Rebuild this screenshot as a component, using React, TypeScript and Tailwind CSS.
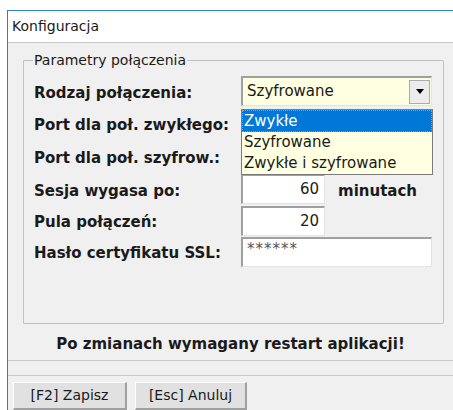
const labels = [
  "Rodzaj połączenia:",
  "Port dla poł. zwykłego:",
  "Port dla poł. szyfrow.:",
  "Sesja wygasa po:",
  "Pula połączeń:",
  "Hasło certyfikatu SSL:",
];

const options = ["Zwykłe", "Szyfrowane", "Zwykłe i szyfrowane"];

const sunken =
  "border-t-2 border-l-2 border-b border-r border-t-[#a0a0a0] border-l-[#a0a0a0] border-b-[#e3e3e3] border-r-[#e3e3e3]";

const Field = ({ value, wide }: { value: string; wide?: boolean }) => (
  <div
    className={`${sunken} bg-white h-[30px] flex items-center font-normal ${
      wide ? "w-[191px] justify-start pl-[4px]" : "w-[84px] justify-end pr-[5px]"
    }`}
  >
    <span className={wide ? "text-[#555] tracking-[1px] -mt-[6px]" : ""}>{value}</span>
  </div>
);

const Label = ({ children }: { children: string }) => (
  <span className="pt-[4px]">{children}</span>
);

const btn =
  "h-[28px] bg-[#e1e1e1] border-t border-l border-white border-r-2 border-b-2 border-r-[#a0a0a0] border-b-[#a0a0a0]";

export default function App() {
  return (
    <div className="w-[453px] h-[410px] bg-white pt-[10px] pl-[7px] overflow-hidden text-[15px] text-[#1a1a1a] font-['DejaVu_Sans',sans-serif]">
      <div className="h-full flex flex-col border-t border-l border-[#2a7fd4]">
        <div className="h-[33px] bg-white flex items-center pl-[4px] border-b border-[#c8c8c8] text-[14px]">
          Konfiguracja
        </div>

        <div className="flex-1 bg-[#f0f0f0] flex flex-col">
          <fieldset className="relative mt-[9px] ml-[15px] mr-[9px] h-[272px] border border-[#c3c3c3] rounded-[1px] pl-[10px]">
            <legend className="-ml-[1px] px-[1px] text-[14px] leading-[16px]">
              Parametry połączenia
            </legend>

            <div className="grid grid-cols-[207px_1fr] grid-rows-[32px_33px_33px_32px_31px_31px] items-center mt-[7px] font-bold">
              <Label>{labels[0]}</Label>
              <div className={`${sunken} h-[30px] w-[191px] bg-[#ffffe1] flex items-center justify-between pl-[4px] pr-[1px] font-normal`}>
                <span>Szyfrowane</span>
                <div className="w-[21px] h-[24px] bg-[#ececec] border border-[#adadad] flex items-center justify-center">
                  <svg width="8" height="5" viewBox="0 0 8 5">
                    <path d="M0 0h8L4 5z" fill="#000" />
                  </svg>
                </div>
              </div>

              <Label>{labels[1]}</Label>
              <div />

              <Label>{labels[2]}</Label>
              <div />

              <Label>{labels[3]}</Label>
              <div className="flex items-center gap-[13px]">
                <Field value="60" />
                <span className="pt-[4px]">minutach</span>
              </div>

              <Label>{labels[4]}</Label>
              <Field value="20" />

              <Label>{labels[5]}</Label>
              <Field value="******" wide />
            </div>

            {/* open list of the connection type combo */}
            <div className="absolute left-[217px] top-[41px] w-[192px] bg-[#ffffe1] border border-[#7a7a7a] flex flex-col leading-[21px]">
              {options.map((o, i) => (
                <span
                  key={o}
                  className={
                    i === 0
                      ? "bg-[#0078d7] text-white pl-[2px] h-[22px] leading-[22px] outline-1 outline-dotted outline-[#e08a2c] -outline-offset-1"
                      : "pl-[2px] h-[21px]"
                  }
                >
                  {o}
                </span>
              ))}
            </div>
          </fieldset>

          <div className="h-[36px] flex items-center justify-center font-bold pt-[4px]">
            Po zmianach wymagany restart aplikacji!
          </div>
          <div className="h-[16px] border-t border-b border-[#c8c8c8] bg-[#f0f0f0]" />

          <div className="flex gap-[8px] pl-[5px] pt-[6px] text-[14px]">
            <button className={`${btn} w-[114px]`}>[F2] Zapisz</button>
            <button className={`${btn} w-[112px]`}>[Esc] Anuluj</button>
          </div>
        </div>
      </div>
    </div>
  );
}
